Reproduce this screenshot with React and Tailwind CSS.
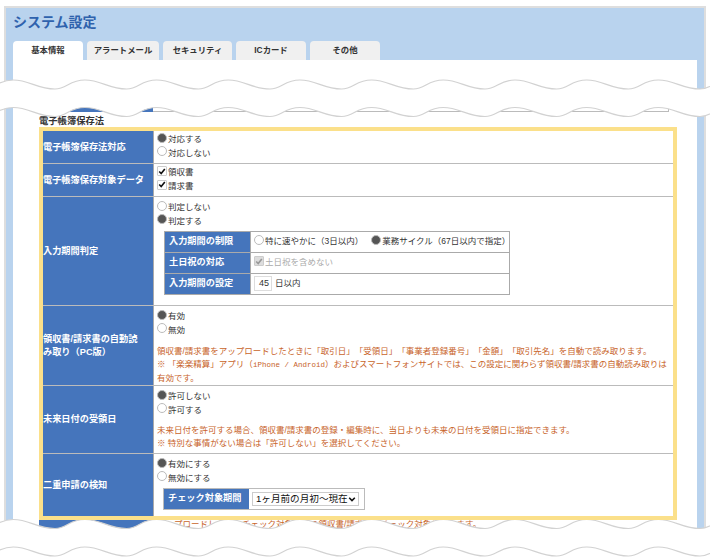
const font = { fontFamily: '"Liberation Sans", "Noto Sans CJK JP", sans-serif' }

const PERIOD = 71.67
const START = -16.7
const COUNT = 12

// one wave drawn left to right
function wavePath(top) {
  const low = top + 9
  let d = `M${START} ${low}`
  for (let i = 0; i < COUNT; i++) {
    const x = START + i * PERIOD
    d += ` C${x + 12} ${low} ${x + 14} ${top} ${x + 30} ${top}`
    d += ` C${x + 46} ${top} ${x + 54} ${low} ${x + PERIOD} ${low}`
  }
  return d
}

// same wave walked back right to left, to close the white band
function waveBack(top) {
  const low = top + 9
  let d = `L${START + COUNT * PERIOD} ${low}`
  for (let i = COUNT - 1; i >= 0; i--) {
    const x = START + i * PERIOD
    d += ` C${x + 54} ${low} ${x + 46} ${top} ${x + 30} ${top}`
    d += ` C${x + 14} ${top} ${x + 12} ${low} ${x} ${low}`
  }
  return d
}

function Wave({ y }) {
  return (
    <>
      <path d={`${wavePath(y)} ${waveBack(y + 27.5)} Z`} fill="#ffffff" />
      <path d={wavePath(y)} fill="none" stroke="#d2d2d2" strokeWidth="1.2" />
      <path d={wavePath(y + 27.5)} fill="none" stroke="#d2d2d2" strokeWidth="1.2" />
    </>
  )
}

function Radio({ on, label }) {
  return (
    <label className="flex items-center h-[13.4px] text-[#333] whitespace-nowrap">
      <span
        className={
          on
            ? 'w-[10px] h-[10px] -mt-[4px] rounded-full border border-[#bbb] bg-[#555] shrink-0'
            : 'w-[10px] h-[10px] -mt-[4px] rounded-full border border-[#bbb] bg-white shrink-0'
        }
      />
      <span className="ml-[1px]">{label}</span>
    </label>
  )
}

function Check({ label, disabled }) {
  return (
    <label className={disabled ? 'flex items-center h-[13.4px] text-[#aaa]' : 'flex items-center h-[13.4px] text-[#333]'}>
      <span
        className={
          disabled
            ? 'w-[10px] h-[10px] -mt-[3px] rounded-[1px] border border-[#ccc] bg-[#ddd] shrink-0 flex items-center justify-center'
            : 'w-[10px] h-[10px] -mt-[3px] rounded-[1px] border border-[#ccc] bg-white shrink-0 flex items-center justify-center'
        }
      >
        <svg viewBox="0 0 10 10" className="w-[9px] h-[9px]">
          <path d="M1.5 5 L4 7.5 L8.5 2" fill="none" stroke={disabled ? '#999' : '#111'} strokeWidth="2" />
        </svg>
      </span>
      <span className="ml-[1px]">{label}</span>
    </label>
  )
}

function Row({ label, className, children }) {
  return (
    <div className={`flex border-b border-[#bbb] ${className}`}>
      <div className="w-[110px] shrink-0 flex items-center bg-[#4575bc] text-white font-bold text-[9.2px] leading-[13px] whitespace-nowrap">
        {label}
      </div>
      <div className="flex-1 border-l border-[#aaa] pl-[3px]">{children}</div>
    </div>
  )
}

function SubRow({ label, className, children }) {
  return (
    <div className={`flex ${className}`}>
      <div className="w-[85px] shrink-0 flex items-center bg-[#4575bc] pl-[4px] text-white font-bold text-[9.2px]">
        {label}
      </div>
      <div className="flex-1 flex items-center pl-[3px] border-l border-[#aaa]">{children}</div>
    </div>
  )
}

export default function App() {
  return (
    <div className="relative w-[710px] h-[560px] overflow-hidden bg-white text-[8.5px] [text-spacing-trim:space-all]" style={font}>
      <div className="ml-[4px] mt-[6px] w-[702px] h-[534px] border-2 border-[#dedede] bg-[#b9d3ee] overflow-hidden">
        <div className="h-[33px] pl-[7px] pt-[5px] text-[14px] leading-[18px] font-bold text-[#2f62ad]">システム設定</div>
        <div className="flex h-[19px] pl-[7px] gap-[4px] text-[8.4px] font-bold text-[#333]">
          <div className="w-[70px] rounded-t-[4px] bg-white flex items-center justify-center">基本情報</div>
          <div className="w-[72px] rounded-t-[4px] bg-[#f0f0f0] flex items-center justify-center">アラートメール</div>
          <div className="w-[69px] rounded-t-[4px] bg-[#f0f0f0] flex items-center justify-center">セキュリティ</div>
          <div className="w-[70px] rounded-t-[4px] bg-[#f0f0f0] flex items-center justify-center">ICカード</div>
          <div className="w-[70px] rounded-t-[4px] bg-[#f0f0f0] flex items-center justify-center">その他</div>
        </div>
        <div className="ml-[7px] w-[684px] h-[480px] bg-white pl-[26px] pt-[40px]">
          <div className="flex h-[12px] w-[630px]">
            <div className="w-[114px] bg-[#4575bc]" />
            <div className="flex-1 border-b border-r border-[#bbb]" />
          </div>
          <div className="h-[15px] pt-[4px] text-[9.3px] leading-[11px] font-bold text-[#333]">電子帳簿保存法</div>
          <div className="relative z-10 w-[638px] border-4 border-[#fbe08a] bg-white">
            <Row label="電子帳簿保存法対応" className="h-[33px]">
              <div className="pt-[2px]">
                <Radio on label="対応する" />
                <Radio label="対応しない" />
              </div>
            </Row>
            <Row label="電子帳簿保存対象データ" className="h-[33px]">
              <div className="pt-[2px]">
                <Check label="領収書" />
                <Check label="請求書" />
              </div>
            </Row>
            <Row label="入力期間判定" className="h-[109px]">
              <div className="pt-[4px]">
                <Radio label="判定しない" />
                <Radio on label="判定する" />
                <div className="mt-[3px] ml-[7px] w-[346px] border border-[#aaa]">
                  <SubRow label="入力期間の制限" className="h-[21px] border-b border-[#aaa]">
                    <div className="flex gap-[8px]">
                      <Radio label="特に速やかに（3日以内）" />
                      <Radio on label="業務サイクル（67日以内で指定）" />
                    </div>
                  </SubRow>
                  <SubRow label="土日祝の対応" className="h-[21px] border-b border-[#aaa]">
                    <Check disabled label="土日祝を含めない" />
                  </SubRow>
                  <SubRow label="入力期間の設定" className="h-[20px]">
                    <div className="flex items-center gap-[3px] text-[#333]">
                      <span className="w-[18px] h-[15px] border border-[#ddd] flex items-center justify-end pr-[2px] text-[9px]">45</span>
                      <span>日以内</span>
                    </div>
                  </SubRow>
                </div>
              </div>
            </Row>
            <Row label={<span>領収書/請求書の自動読<br />み取り（PC版）</span>} className="h-[80px]">
              <div className="pt-[4px]">
                <Radio on label="有効" />
                <Radio label="無効" />
                <p className="mt-[8px] leading-[13px] text-[#c8642a] whitespace-nowrap">
                  領収書/請求書をアップロードしたときに「取引日」「受領日」「事業者登録番号」「金額」「取引先名」を自動で読み取ります。
                  <br />
                  ※ 「楽楽精算」アプリ（<span className="font-['Liberation_Mono'] text-[7.5px]">iPhone / Android</span>）およびスマートフォンサイトでは、この設定に関わらず領収書/請求書の自動読み取りは
                  <br />
                  有効です。
                </p>
              </div>
            </Row>
            <Row label="未来日付の受領日" className="h-[68px]">
              <div className="pt-[4px]">
                <Radio on label="許可しない" />
                <Radio label="許可する" />
                <p className="mt-[7px] leading-[13px] text-[#c8642a] whitespace-nowrap">
                  未来日付を許可する場合、領収書/請求書の登録・編集時に、当日よりも未来の日付を受領日に指定できます。
                  <br />
                  ※ 特別な事情がない場合は「許可しない」を選択してください。
                </p>
              </div>
            </Row>
            <Row label="二重申請の検知" className="h-[62px] border-b-0">
              <div className="pt-[4px]">
                <Radio on label="有効にする" />
                <Radio label="無効にする" />
                <div className="mt-[3px] ml-[6px] w-[202px] h-[22px] flex border border-[#bbb]">
                  <div className="w-[85px] shrink-0 flex items-center bg-[#4575bc] pl-[4px] text-white font-bold text-[9.2px]">
                    チェック対象期間
                  </div>
                  <div className="flex-1 flex items-center pl-[3px]">
                    <div className="relative w-[107px] h-[14px]">
                      <select defaultValue="1" className="appearance-none w-full h-full pl-[3px] border border-[#ccc] text-[9.6px] leading-[12px] text-[#111] bg-white">
                        <option value="1">1ヶ月前の月初～現在</option>
                      </select>
                      <svg viewBox="0 0 10 10" className="absolute right-[3px] top-[3px] w-[8px] h-[8px] pointer-events-none">
                        <path d="M1.5 3.5 L5 7 L8.5 3.5" fill="none" stroke="#111" strokeWidth="2" />
                      </svg>
                    </div>
                  </div>
                </div>
              </div>
            </Row>
          </div>
          <div className="flex h-[20px] w-[630px]">
            <div className="w-[114px] bg-[#4575bc]" />
            <p className="pl-[4px] text-[#c8642a] leading-[9px] whitespace-nowrap">
              アップロードした時にチェック対象期間の領収書/請求書をチェック対象となります。
            </p>
          </div>
        </div>
      </div>
      <svg viewBox="0 0 710 560" className="absolute inset-0 z-[5] w-[710px] h-[560px] pointer-events-none">
        <Wave y={80} />
        <Wave y={519.5} />
      </svg>
    </div>
  )
}
